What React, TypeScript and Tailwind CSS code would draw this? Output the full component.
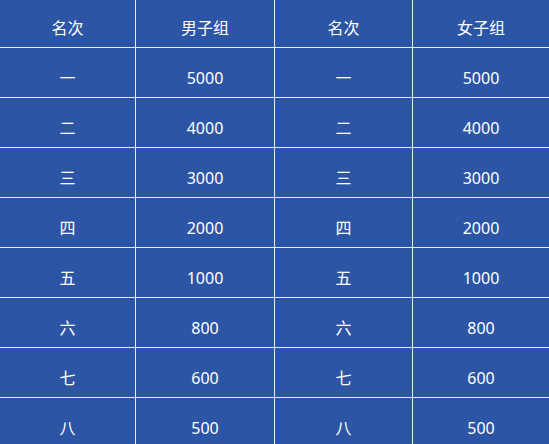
const rows: [string, string, string, string][] = [
  ["一", "5000", "一", "5000"],
  ["二", "4000", "二", "4000"],
  ["三", "3000", "三", "3000"],
  ["四", "2000", "四", "2000"],
  ["五", "1000", "五", "1000"],
  ["六", "800", "六", "800"],
  ["七", "600", "七", "600"],
  ["八", "500", "八", "500"],
];

const widths = ["w-[136px]", "w-[139px]", "w-[138px]", "flex-1"];

function Row({ cells, header }: { cells: string[]; header?: boolean }) {
  return (
    <div className={`flex border-b border-[#e8eef8] ${header ? "h-[48px]" : "h-[50px]"}`}>
      {cells.map((c, i) => (
        <div
          key={i}
          className={`${widths[i]} flex items-center justify-center ${header ? "pt-[9px]" : "pt-[11px]"} ${
            i < 3 ? "border-r border-[#e8eef8]" : ""
          }`}
        >
          {c}
        </div>
      ))}
    </div>
  );
}

export default function App() {
  return (
    <div
      className="w-[549px] h-[444px] overflow-hidden bg-[#2c55a5] text-white text-[16px] leading-none"
      style={{ fontFamily: '"Noto Sans", "Noto Sans CJK SC", sans-serif' }}
    >
      <Row header cells={["名次", "男子组", "名次", "女子组"]} />
      {rows.map((r, i) => (
        <Row key={i} cells={r} />
      ))}
    </div>
  );
}
